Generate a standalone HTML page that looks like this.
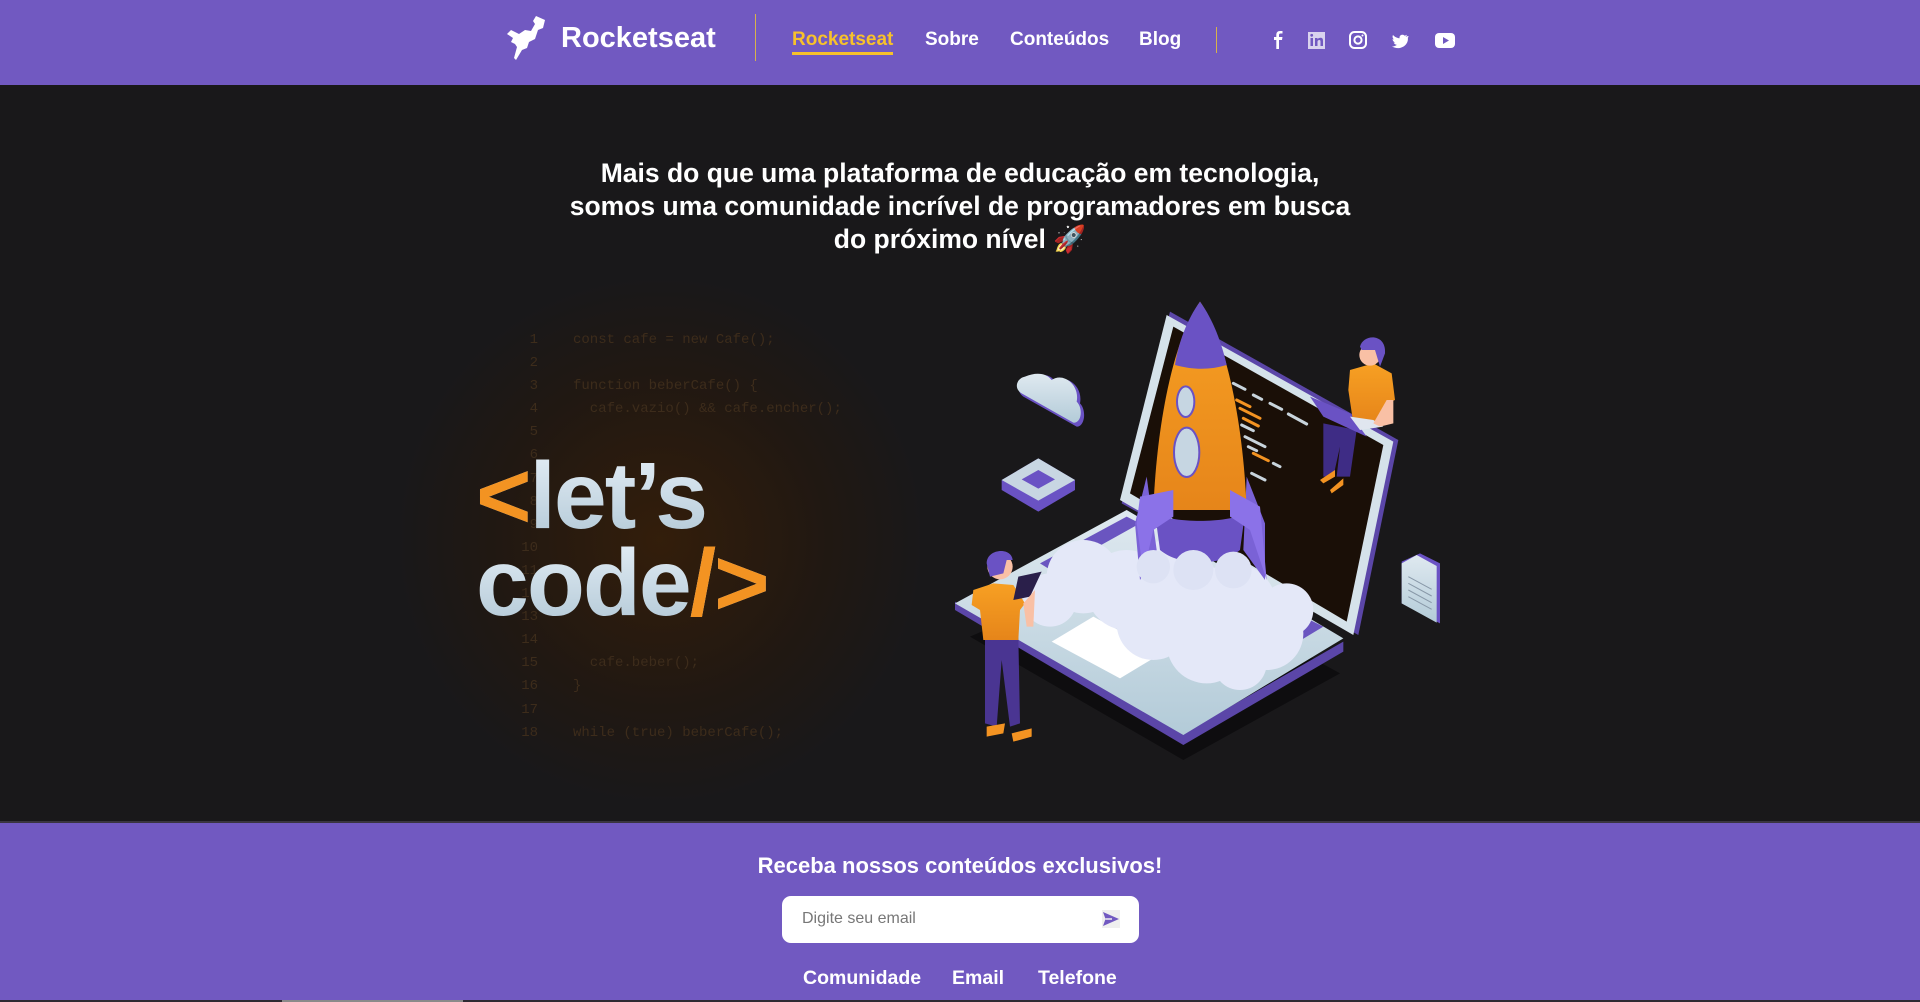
<!DOCTYPE html>
<html><head><meta charset="utf-8">
<style>
*{margin:0;padding:0;box-sizing:border-box}
body{width:1920px;height:1002px;overflow:hidden;background:#19181a;font-family:"Liberation Sans",Arial,sans-serif;position:relative}
.hdr{position:absolute;left:0;top:0;width:1920px;height:85px;background:#7159c1}
.abs{position:absolute}
.nav a{position:absolute;top:29px;font-size:19px;font-weight:bold;color:#fff;text-decoration:none;white-space:nowrap}
.hero{position:absolute;top:157px;left:0;width:1920px;text-align:center;color:#fff;font-size:26.5px;font-weight:bold;line-height:33px}
.glow{position:absolute;left:400px;top:280px;width:520px;height:520px;background:radial-gradient(circle at 50% 50%,rgba(62,32,4,.7) 0%,rgba(40,24,10,.5) 45%,rgba(25,24,26,0) 72%)}
.code{position:absolute;left:500px;top:329px;font-family:"Liberation Mono",monospace;font-size:14px;line-height:23.1px;color:#3d2c1b;white-space:pre}
.ln{display:inline-block;width:38px;text-align:right;margin-right:35px}
.big{position:absolute;left:476px;font-size:95px;font-weight:bold;letter-spacing:-2px;line-height:1;background:linear-gradient(#e4eef6,#b2c8d6);-webkit-background-clip:text;color:transparent}
.or{color:#f39322;-webkit-text-fill-color:#f39322}
.ftr{position:absolute;left:0;top:821px;width:1920px;height:181px;background:#7159c1;border-top:2px solid #3a3540}
</style></head><body>
<div class="hdr">
 <svg class="abs" style="left:505px;top:14px" width="46" height="48" viewBox="0 0 46 48">
  <path d="M31 2 L40 6 L38 14 L33 16 L30 25 L24 28 L22 34 L17 36 L11 46 L9 44 L12 33 L10 30 L6 28 L8 24 L2 20 L6 16 L14 20 L20 16 L26 17 L30 10 L28 7 Z" fill="#fff"/>
 </svg>
 <div class="abs" style="left:561px;top:22px;font-size:29px;font-weight:bold;color:#fff">Rocketseat</div>
 <div class="abs" style="left:755px;top:14px;width:1px;height:47px;background:#d7b34a"></div>
 <div class="nav">
  <a style="left:792px;color:#f7c12b">Rocketseat</a>
  <div class="abs" style="left:792px;top:52px;width:101px;height:3px;background:#f7c12b"></div>
  <a style="left:925px">Sobre</a>
  <a style="left:1010px">Conteúdos</a>
  <a style="left:1139px">Blog</a>
 </div>
 <div class="abs" style="left:1216px;top:27px;width:1px;height:26px;background:#d7b34a"></div>
 <svg class="abs" style="left:1268px;top:29px" width="200" height="24" viewBox="0 0 200 24">
  <path d="M11 20 V11 H14 L14.5 8 H11 V6 C11 5 11.5 4.5 12.5 4.5 H14.5 V2 H12 C9.5 2 8.3 3.5 8.3 6 V8 H6 V11 H8.3 V20 Z" fill="#fff"/>
  <rect x="40" y="3" width="17" height="17" fill="#d9d3ee"/>
  <rect x="42.5" y="9" width="2.5" height="8" fill="#7159c1"/><circle cx="43.7" cy="6.3" r="1.4" fill="#7159c1"/>
  <path d="M47 9 H49.5 V10.3 C50.2 9.2 51.5 8.8 52.5 8.8 C54.5 8.8 55 10 55 12 V17 H52.5 V12.5 C52.5 11.3 52 11 51.3 11 C50.3 11 49.5 11.6 49.5 12.8 V17 H47 Z" fill="#7159c1"/>
  <rect x="82" y="3" width="16" height="16" rx="4.5" fill="none" stroke="#fff" stroke-width="2"/>
  <circle cx="90" cy="11" r="3.6" fill="none" stroke="#fff" stroke-width="2"/><circle cx="94.5" cy="6.5" r="1" fill="#fff"/>
  <path d="M140 7 C139 7.5 138.2 7.6 137.5 7.7 C138.3 7.2 138.8 6.5 139 5.8 C138.3 6.2 137.5 6.5 136.7 6.7 C135 4.9 131.8 5.8 131.5 8.3 C131.5 8.7 131.6 9 131.6 9.2 C128.9 9.1 126.5 7.8 125 6 C124.1 7.6 124.7 9.5 126.1 10.4 C125.5 10.4 125 10.2 124.6 10 C124.6 11.7 125.7 13 127.3 13.4 C126.8 13.6 126.2 13.6 125.7 13.5 C126.2 14.9 127.5 15.8 128.9 15.9 C127.3 17.1 125.5 17.6 123.8 17.4 C131.6 22 141 16.5 139.8 8.6 C140.5 8.1 141 7.6 140 7 Z" fill="#fff"/>
  <rect x="167" y="4" width="20" height="15" rx="4" fill="#fff"/><path d="M175 8 L181 11.5 L175 15 Z" fill="#7159c1"/>
 </svg>
</div>

<div class="hero">Mais do que uma plataforma de educação em tecnologia,<br>somos uma comunidade incrível de programadores em busca<br>do próximo nível 🚀</div>

<div class="glow"></div>
<div class="code"><span class="ln">1</span>const cafe = new Cafe();
<span class="ln">2</span>
<span class="ln">3</span>function beberCafe() {
<span class="ln">4</span>  cafe.vazio() &amp;&amp; cafe.encher();
<span class="ln">5</span>
<span class="ln">6</span>
<span class="ln">7</span>
<span class="ln">8</span>
<span class="ln">9</span>
<span class="ln">10</span>
<span class="ln">11</span>
<span class="ln">12</span>
<span class="ln">13</span>
<span class="ln">14</span>
<span class="ln">15</span>  cafe.beber();
<span class="ln">16</span>}
<span class="ln">17</span>
<span class="ln">18</span>while (true) beberCafe();</div>
<div class="big" style="top:449px"><span class="or">&lt;</span>let’s</div>
<div class="big" style="top:536px">code<span class="or">/&gt;</span></div>

<svg class="abs" style="left:940px;top:290px" width="520" height="490" viewBox="0 0 1560 1470">
 <defs>
  <linearGradient id="lg" x1="0" y1="0" x2="0" y2="1"><stop offset="0" stop-color="#dfe9f0"/><stop offset="1" stop-color="#b3cbd8"/></linearGradient>
  <linearGradient id="og" x1="0" y1="0" x2="0" y2="1"><stop offset="0" stop-color="#f7a023"/><stop offset="1" stop-color="#e6851a"/></linearGradient>
 </defs>
 <path d="M90 1040 L730 1410 L1200 1150 L600 820 Z" fill="#0e0d0f"/>
 <path d="M45 960 L730 1365 L1210 1085 L1210 1055 L730 1330 L45 935 Z" fill="#5b46a8"/>
 <path d="M45 940 L560 660 L1210 1045 L730 1335 Z" fill="url(#lg)"/>
 <path d="M335 1055 L460 980 L665 1090 L540 1165 Z" fill="#fff"/>
 <path d="M300 820 L560 680 L600 700 L340 845 Z" fill="#6a55c0"/>
 <path d="M860 1130 L1110 990 L1150 1010 L900 1160 Z" fill="#6a55c0"/>
 <path d="M690 65 L1375 450 L1255 1035 L545 640 Z" fill="#5b46a8"/>
 <path d="M680 75 L1360 455 L1240 1035 L540 630 Z" fill="#d5e2ea"/>
 <path d="M700 110 L1330 465 L1220 995 L570 610 Z" fill="#1a0f07"/>
 <g stroke-width="9" stroke-linecap="round">
  <path d="M880 280 L915 298 M940 315 L965 328 M990 340 L1025 358 M1045 372 L1100 402" stroke="#c8d4dc"/>
  <path d="M890 330 L930 350 M900 355 L960 385 M910 385 L955 408 M940 490 L985 512" stroke="#f39322"/>
  <path d="M905 405 L940 422 M915 440 L975 470 M925 470 L950 482 M1000 520 L1020 530 M935 550 L975 570" stroke="#c8d4dc"/>
 </g>
 <g fill="#e4e8f8">
  <circle cx="430" cy="860" r="110"/><circle cx="330" cy="930" r="80"/><circle cx="560" cy="900" r="120"/>
  <circle cx="700" cy="880" r="130"/><circle cx="880" cy="950" r="130"/><circle cx="980" cy="1030" r="110"/>
  <circle cx="800" cy="1060" r="120"/><circle cx="640" cy="1000" r="110"/><circle cx="1040" cy="960" r="80"/>
  <circle cx="900" cy="1120" r="80"/><circle cx="700" cy="830" r="90"/>
 </g>
 <path d="M620 560 L585 700 L600 870 L650 780 Z" fill="#7a62d6"/>
 <path d="M920 560 L975 700 L975 870 L910 780 Z" fill="#7a62d6"/>
 <path d="M780 35 C700 150 650 400 640 660 L920 660 C910 400 860 150 780 35 Z" fill="url(#og)"/>
 <path d="M780 35 C740 90 715 160 705 225 C760 240 810 240 860 225 C845 160 820 90 780 35 Z" fill="#6a52c4"/>
 <ellipse cx="737" cy="335" rx="26" ry="46" fill="#c6d6e2" stroke="#6a52c4" stroke-width="6"/>
 <ellipse cx="740" cy="487" rx="38" ry="74" fill="#c6d6e2" stroke="#6a52c4" stroke-width="6"/>
 <path d="M645 670 C700 700 860 700 915 670 L900 780 C840 830 720 830 660 780 Z" fill="#6a52c4"/>
 <path d="M600 620 L700 600 L700 680 L640 720 L610 850 L590 700 Z" fill="#8b72e8"/>
 <path d="M870 600 L960 650 L980 870 L930 720 L870 680 Z" fill="#8b72e8"/>
 <g fill="#dde2f4"><circle cx="640" cy="830" r="50"/><circle cx="760" cy="840" r="60"/><circle cx="880" cy="840" r="55"/></g>
 <path d="M260 265 C300 250 330 250 345 275 C380 250 430 290 420 340 C440 360 435 410 410 410 L250 320 C225 300 235 270 260 265 Z" fill="#6a52c4"/>
 <path d="M255 260 C290 245 320 250 335 270 C370 245 420 285 410 335 C430 355 425 400 400 398 L245 310 C220 295 230 265 255 260 Z" fill="url(#lg)"/>
 <path d="M185 570 L295 505 L405 570 L405 600 L295 665 L185 600 Z" fill="#6a52c4"/>
 <path d="M185 570 L295 505 L405 570 L295 632 Z" fill="#c8d6e2"/>
 <path d="M245 568 L295 540 L345 568 L295 596 Z" fill="#6a52c4"/>
 <path d="M1385 815 L1440 790 L1500 820 L1500 1000 L1385 940 Z" fill="#6a52c4"/>
 <path d="M1385 820 L1430 795 L1490 828 L1490 998 L1385 940 Z" fill="url(#lg)"/>
 <g stroke="#8898a8" stroke-width="3"><path d="M1405 860 L1475 898 M1405 880 L1475 918 M1405 900 L1475 938 M1405 920 L1475 958"/></g>
 <path d="M135 1040 L235 1040 L240 1300 L210 1310 L185 1110 L170 1310 L135 1300 Z" fill="#4a3592"/>
 <path d="M140 1310 L195 1300 L190 1330 L140 1340 Z M215 1330 L275 1315 L275 1340 L220 1355 Z" fill="#f39322"/>
 <path d="M100 900 L160 880 L220 885 L255 940 L240 960 L235 1050 L130 1050 L120 960 L95 945 Z" fill="url(#og)"/>
 <path d="M235 860 L305 845 L270 920 L220 930 Z" fill="#2a1f4a"/>
 <path d="M250 940 L285 900 L280 1010 L260 1010 Z" fill="#f9c0a5"/>
 <circle cx="180" cy="830" r="38" fill="#f9c0a5"/>
 <path d="M140 820 C140 775 215 770 218 810 L200 810 L190 850 L150 860 Z" fill="#6a52c4"/>
 <path d="M1150 400 L1250 420 L1230 560 L1190 560 L1200 470 L1180 560 L1150 560 Z" fill="#3e2c85"/>
 <path d="M1140 570 L1185 540 L1185 560 L1150 580 Z M1170 600 L1210 565 L1210 585 L1175 610 Z" fill="#f39322"/>
 <path d="M1230 240 L1300 220 L1355 250 L1365 330 L1340 340 L1330 400 L1240 400 L1225 300 Z" fill="url(#og)"/>
 <path d="M1110 320 L1230 370 L1280 440 L1150 380 Z" fill="#6a52c4"/>
 <path d="M1230 380 L1300 390 L1330 410 L1260 420 Z" fill="#e0e6ef"/>
 <path d="M1340 330 L1360 330 L1360 400 L1320 410 L1300 400 Z" fill="#f9c0a5"/>
 <circle cx="1290" cy="195" r="32" fill="#f9c0a5"/>
 <path d="M1260 170 C1270 130 1340 130 1335 190 L1320 230 L1305 180 L1265 180 Z" fill="#6a52c4"/>
</svg>

<div class="ftr">
 <div class="abs" style="left:0;top:30px;width:1920px;text-align:center;font-size:22px;font-weight:bold;color:#fff">Receba nossos conteúdos exclusivos!</div>
 <div class="abs" style="left:782px;top:73px;width:357px;height:47px;background:#fff;border-radius:9px">
  <div class="abs" style="left:20px;top:14px;font-size:16px;color:#777">Digite seu email</div>
  <div class="abs" style="left:320px;top:14px;width:18px;height:18px;background:#efefef"></div>
  <svg class="abs" style="left:320px;top:14px" width="18" height="18" viewBox="0 0 18 18"><path d="M1 2 L17 9 L1 16 L3.5 9 Z" fill="#7159c1"/><path d="M3.5 9 H10" stroke="#efefef" stroke-width="1.5"/></svg>
 </div>
 <div class="abs" style="left:803px;top:144px;font-size:19.5px;font-weight:bold;color:#fff">Comunidade</div>
 <div class="abs" style="left:952px;top:144px;font-size:19.5px;font-weight:bold;color:#fff">Email</div>
 <div class="abs" style="left:1038px;top:144px;font-size:19.5px;font-weight:bold;color:#fff">Telefone</div>
 <div class="abs" style="left:0;top:177px;width:1920px;height:2px;background:#2e2a33"></div>
 <div class="abs" style="left:282px;top:177px;width:181px;height:2px;background:#8a8a8a"></div>
</div>
</body></html>
